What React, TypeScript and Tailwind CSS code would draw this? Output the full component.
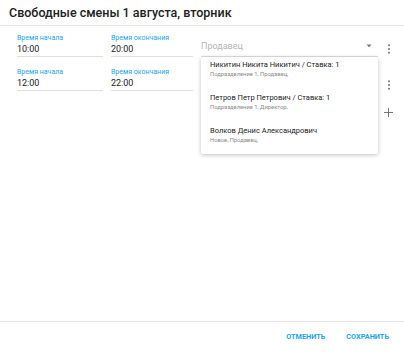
import React from "react";

const font = { fontFamily: "Roboto, 'Noto Sans', sans-serif" };

function Kebab() {
  return (
    <svg width="4" height="10" viewBox="0 0 4 10" className="block">
      <circle cx="2" cy="1.3" r="1" fill="#777" />
      <circle cx="2" cy="5" r="1" fill="#777" />
      <circle cx="2" cy="8.7" r="1" fill="#777" />
    </svg>
  );
}

function Field({ label, value, width }: { label: string; value: string; width: string }) {
  return (
    <div className={`flex flex-col ${width} border-b border-[#e0e0e0]`}>
      <span className="text-[7px] leading-[10px] text-[#16a6f0]">{label}</span>
      <span className="text-[9px] leading-[12px] pb-[1px] text-[#222]">{value}</span>
    </div>
  );
}

const people = [
  { name: "Никитин Никита Никитич / Ставка: 1", sub: "Подразделение 1, Продавец," },
  { name: "Петров Петр Петрович / Ставка: 1", sub: "Подразделение 1, Директор," },
  { name: "Волков Денис Александрович", sub: "Новое, Продавец," },
];

export default function App() {
  return (
    <div className="w-[404px] h-[353px] bg-white flex flex-col relative overflow-hidden" style={font}>
      <div className="h-[26px] px-[9px] flex items-center border-b border-[#e6e6e6] shrink-0">
        <span className="text-[12.5px] font-medium text-[#212121] pt-[1px]">Свободные смены 1 августа, вторник</span>
      </div>

      <div className="flex-1 flex flex-col pl-[17px] pt-[7px] gap-[10px]">
        <div className="flex items-start">
          <Field label="Время начала" value="10:00" width="w-[86px]" />
          <div className="w-[8px]" />
          <Field label="Время окончания" value="20:00" width="w-[82px]" />
          <div className="w-[8px]" />
          <div className="w-[177px] h-[24px] flex items-end justify-between pb-[4px] border-b border-[#e0e0e0]">
            <span className="text-[9px] leading-[12px] text-[#b5b5b5]">Продавец</span>
            <svg width="6" height="4" viewBox="0 0 6 4" className="mr-[6px] mb-[4px]">
              <path d="M0.5 0.5 L3 3.2 L5.5 0.5 Z" fill="#777" />
            </svg>
          </div>
          <div className="ml-[9px] pt-[11px]">
            <Kebab />
          </div>
        </div>

        <div className="flex items-start">
          <Field label="Время начала" value="12:00" width="w-[86px]" />
          <div className="w-[8px]" />
          <Field label="Время окончания" value="22:00" width="w-[82px]" />
          <div className="w-[8px]" />
          <div className="w-[177px]" />
          <div className="ml-[9px] pt-[13px]">
            <Kebab />
          </div>
        </div>

        <div className="flex justify-end pr-[11px] mt-[7px]">
          <svg width="9" height="9" viewBox="0 0 9 9">
            <path d="M4.5 0 V9 M0 4.5 H9" stroke="#666" strokeWidth="0.9" />
          </svg>
        </div>
      </div>

      <div className="h-[32px] border-t border-[#e6e6e6] flex items-center justify-end gap-[21px] pr-[15px] shrink-0">
        <button className="text-[7.3px] font-bold text-[#16a6f0]">ОТМЕНИТЬ</button>
        <button className="text-[7.3px] font-bold text-[#16a6f0]">СОХРАНИТЬ</button>
      </div>

      <div className="absolute left-[201px] top-[57px] w-[177px] h-[97px] overflow-hidden bg-white rounded-[2px] shadow-[0_1px_4px_rgba(0,0,0,0.25)]">
        {people.map((p) => (
          <div key={p.name} className="h-[33px] px-[9px] pt-[3px] flex flex-col">
            <span className="text-[7.5px] leading-[10px] text-[#222]">{p.name}</span>
            <span className="text-[5.8px] leading-[8px] text-[#8a8a8a]">{p.sub}</span>
          </div>
        ))}
      </div>
    </div>
  );
}
